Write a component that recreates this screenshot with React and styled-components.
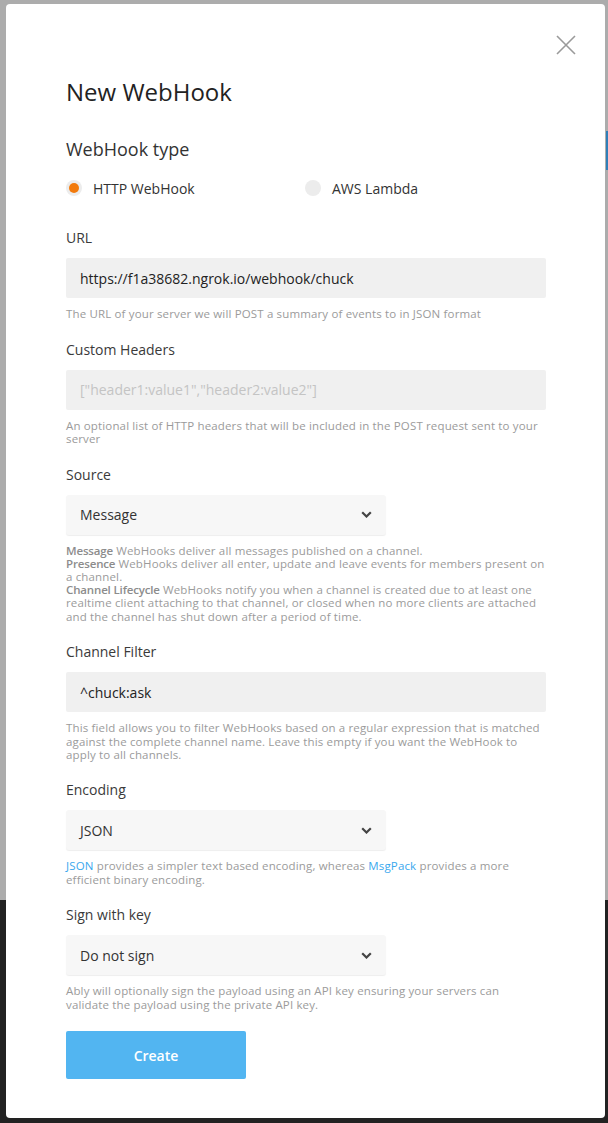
import React from 'react';
import styled, { createGlobalStyle } from 'styled-components';

const GlobalStyle = createGlobalStyle`
  html, body {
    margin: 0;
    padding: 0;
  }
  body {
    font-family: "Open Sans", "Liberation Sans", sans-serif;
    background:
      linear-gradient(#2f7fb8, #2f7fb8) right 131px / 2px 39px no-repeat,
      linear-gradient(to bottom, #acacac 0, #acacac 900px, #222222 900px);
    min-height: 1123px;
  }
`;

const Backdrop = styled.div`
  padding: 4px 3px 0 6px;
  height: 1123px;
  box-sizing: border-box;
`;

const Modal = styled.div`
  position: relative;
  width: 599px;
  box-sizing: border-box;
  background: #fff;
  border-radius: 4px;
  padding: 74px 58px 39px 60px;
  display: flex;
  flex-direction: column;
`;

const CloseButton = styled.button`
  position: absolute;
  top: 31px;
  right: 29px;
  width: 20px;
  height: 20px;
  padding: 0;
  border: none;
  background: none;
  display: flex;
  align-items: center;
  justify-content: center;
`;

const Title = styled.h1`
  margin: 0;
  font-size: 24px;
  line-height: 28px;
  font-weight: 400;
  color: #222;
`;

const SectionHeading = styled.h2`
  margin: 32px 0 0;
  font-size: 18px;
  line-height: 22px;
  font-weight: 400;
  color: #333;
`;

const RadioGroup = styled.div`
  margin-top: 18px;
  display: grid;
  grid-template-columns: 239px 1fr;
`;

const RadioOption = styled.label`
  display: flex;
  align-items: center;
  gap: 11px;
  height: 20px;
  font-size: 14px;
  color: #333;
`;

const RadioDot = styled.span`
  width: 16px;
  height: 16px;
  border-radius: 50%;
  background: #ececec;
  display: flex;
  align-items: center;
  justify-content: center;

  &::after {
    content: '';
    width: 10px;
    height: 10px;
    border-radius: 50%;
    background: ${(p) => (p.checked ? '#f27a0c' : 'transparent')};
  }
`;

const Field = styled.div`
  margin-top: ${(p) => (p.first ? '30px' : '19.5px')};
  display: flex;
  flex-direction: column;
`;

const Label = styled.div`
  font-size: 14px;
  line-height: 20px;
  color: #3a3a3a;
  margin-bottom: 10px;
`;

const TextInput = styled.div`
  width: 480px;
  height: 40px;
  box-sizing: border-box;
  background: #f0f0f0;
  border-radius: 2px;
  padding: 0 14px;
  display: flex;
  align-items: center;
  font-size: 14px;
  color: ${(p) => (p.placeholder ? '#c4c4c4' : '#222')};
`;

const Select = styled.div`
  width: 320px;
  height: 40px;
  box-sizing: border-box;
  background: #f7f7f7;
  border-radius: 3px;
  box-shadow: 0 1px 1px rgba(0, 0, 0, 0.07);
  padding: 0 14px 0 14px;
  display: flex;
  align-items: center;
  justify-content: space-between;
  font-size: 14px;
  color: #333;
`;

const Help = styled.div`
  margin-top: 9px;
  max-width: ${(p) => p.maxWidth || 'none'};
  font-size: 11.5px;
  letter-spacing: 0.15px;
  line-height: 13.2px;
  color: #9b9b9b;

  b {
    font-weight: 600;
    color: #8c8c8c;
    letter-spacing: -0.15px;
  }

  a {
    color: #3aa8ee;
    text-decoration: none;
  }
`;

const CreateButton = styled.button`
  margin-top: 20.5px;
  width: 180px;
  height: 48px;
  border: none;
  border-radius: 2px;
  background: #52b5f1;
  color: #fff;
  font-family: inherit;
  font-size: 14px;
  font-weight: 600;
`;

const Chevron = () => (
  <svg width="11" height="7" viewBox="0 0 11 7">
    <polyline points="1.2,1.2 5.5,5.5 9.8,1.2" fill="none" stroke="#444" strokeWidth="2.2" />
  </svg>
);

const CloseIcon = () => (
  <svg width="20" height="20" viewBox="0 0 20 20">
    <path d="M1 1 L19 19 M19 1 L1 19" stroke="#9a9a9a" strokeWidth="1.6" fill="none" />
  </svg>
);

const App = () => {
  return (
    <Backdrop>
      <GlobalStyle />
      <Modal>
        <CloseButton aria-label="Close">
          <CloseIcon />
        </CloseButton>
        <Title>New WebHook</Title>
        <SectionHeading>WebHook type</SectionHeading>
        <RadioGroup>
          <RadioOption>
            <RadioDot checked />
            HTTP WebHook
          </RadioOption>
          <RadioOption>
            <RadioDot />
            AWS Lambda
          </RadioOption>
        </RadioGroup>

        <Field first>
          <Label>URL</Label>
          <TextInput>https://f1a38682.ngrok.io/webhook/chuck</TextInput>
          <Help>The URL of your server we will POST a summary of events to in JSON format</Help>
        </Field>

        <Field>
          <Label>Custom Headers</Label>
          <TextInput placeholder>["header1:value1","header2:value2"]</TextInput>
          <Help>An optional list of HTTP headers that will be included in the POST request sent to your server</Help>
        </Field>

        <Field>
          <Label>Source</Label>
          <Select>
            Message
            <Chevron />
          </Select>
          <Help>
            <b>Message</b> WebHooks deliver all messages published on a channel.
            <br />
            <b>Presence</b> WebHooks deliver all enter, update and leave events for members present on a channel.
            <br />
            <b>Channel Lifecycle</b> WebHooks notify you when a channel is created due to at least one realtime client
            attaching to that channel, or closed when no more clients are attached and the channel has shut down after
            a period of time.
          </Help>
        </Field>

        <Field>
          <Label>Channel Filter</Label>
          <TextInput>^chuck:ask</TextInput>
          <Help>
            This field allows you to filter WebHooks based on a regular expression that is matched against the complete
            channel name. Leave this empty if you want the WebHook to apply to all channels.
          </Help>
        </Field>

        <Field>
          <Label>Encoding</Label>
          <Select>
            JSON
            <Chevron />
          </Select>
          <Help>
            <a href="#json">JSON</a> provides a simpler text based encoding, whereas <a href="#msgpack">MsgPack</a>{' '}
            provides a more efficient binary encoding.
          </Help>
        </Field>

        <Field>
          <Label>Sign with key</Label>
          <Select>
            Do not sign
            <Chevron />
          </Select>
          <Help maxWidth="470px">
            Ably will optionally sign the payload using an API key ensuring your servers can validate the payload using
            the private API key.
          </Help>
        </Field>

        <div>
          <CreateButton>Create</CreateButton>
        </div>
      </Modal>
    </Backdrop>
  );
};

export default App;
